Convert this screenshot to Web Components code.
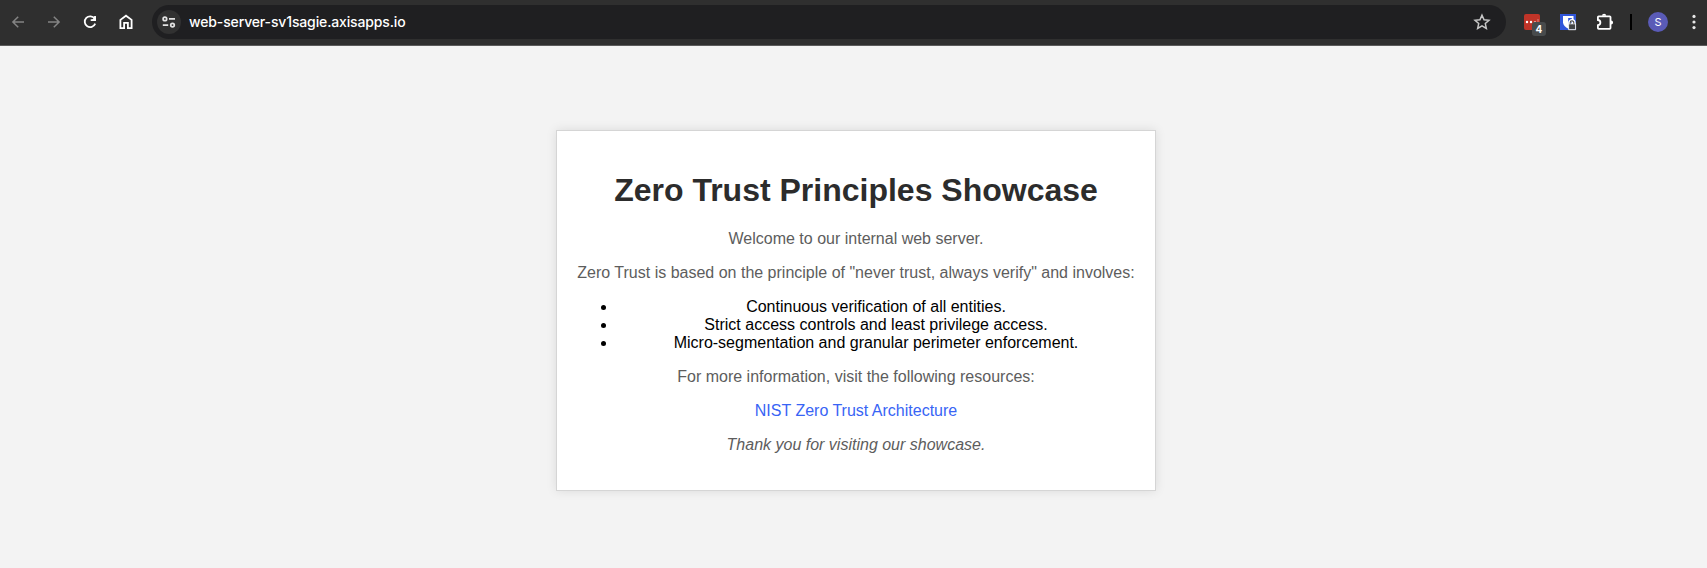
<!DOCTYPE html>
<html lang="en"><head><meta charset="utf-8"><title>Zero Trust Principles Showcase</title>
<style>
body{margin:0;background:#f3f3f3;font-family:"Liberation Sans",Arial,sans-serif;height:568px;overflow:hidden}
</style></head><body>
<browser-toolbar url="web-server-sv1sagie.axisapps.io"></browser-toolbar>
<showcase-card>
<page-title slot="title">Zero Trust Principles Showcase</page-title>
<text-line>Welcome to our internal web server.</text-line>
<text-line>Zero Trust is based on the principle of "never trust, always verify" and involves:</text-line>
<principle-list items="Continuous verification of all entities.|Strict access controls and least privilege access.|Micro-segmentation and granular perimeter enforcement."></principle-list>
<text-line>For more information, visit the following resources:</text-line>
<text-line variant="link">NIST Zero Trust Architecture</text-line>
<text-line variant="note">Thank you for visiting our showcase.</text-line>
</showcase-card>
<script>
const define=(name,html,setup)=>customElements.define(name,class extends HTMLElement{
  constructor(){super();this.attachShadow({mode:'open'}).innerHTML=html;}
  connectedCallback(){if(setup)setup(this,this.shadowRoot);}
});

const icons={
back:['#848484','<path d="M24 22H13.2M18.2 16.7 12.9 22l5.3 5.3" transform="translate(0 -4)"/>',36],
forward:['#848484','<path d="M12 18H22.8M17.8 12.7 23.1 18l-5.3 5.3"/>',36],
reload:['#fff','<path d="M22.6 14.6A5.4 5.4 0 1 0 23.2 19.7" stroke-width="1.8"/><path d="M23.9 12v5h-5z" fill="#fff" stroke="none"/><path d="M23 12v4.2h-4.3" stroke-width="1.8"/>',36],
home:['#fff','<path d="M12.4 24.1V15.9L18 11.7l5.6 4.2v8.2h-3.7v-5.3h-3.8v5.3z" stroke-width="1.8"/>',36],
tune:['#e3e3e3','<g stroke-width="1.7"><circle cx="7.9" cy="8.9" r="1.8"/><path d="M12 8.9H18M5.8 15.1h5.4"/><circle cx="15.5" cy="15.1" r="1.8"/></g>',24],
star:['#c7c7c7','<path d="m18 11.2 2.05 4.55 4.95.5-3.7 3.3 1.05 4.9L18 21.95l-4.35 2.5 1.05-4.9-3.7-3.3 4.95-.5z" stroke-width="1.5"/>',36],
puzzle:['#fff','<path d="M12.7 12.3h11a.8.8 0 0 1 .8.8v11a.8.8 0 0 1-.8.8h-11a.8.8 0 0 1-.8-.8v-2.9c3.3-.3 3.3-4.9 0-5.2v-2.9a.8.8 0 0 1 .8-.8z" stroke-width="1.8"/><path d="M16 11.8a2.1 2.1 0 0 1 4.2 0zM25 16.4a2.1 2.1 0 0 1 0 4.2z" fill="#fff" stroke="none"/>',36],
menu:['#e8e8e8','<g fill="#e8e8e8" stroke="none"><circle cx="18" cy="12.4" r="1.6"/><circle cx="18" cy="18" r="1.6"/><circle cx="18" cy="23.6" r="1.6"/></g>',36],
shield:['#fff','<path d="M10 10h16v16H10z" fill="#3055da" stroke="none"/><path d="M13 12h10.5v6.2c0 3-2.4 5-5.25 6.5C15.4 23.2 13 21.2 13 18.2z" fill="#fff" stroke="none"/><path d="M18.2 14h3.6v4.3c0 1.8-1.6 3.1-3.6 4.3z" fill="#3055da" stroke="none"/><path d="M19.6 20.4v-1.5a2.3 2.3 0 0 1 4.6 0v1.5" stroke="#fff" stroke-width="3"/><path d="M18.6 19.8h7v5.9h-7z" fill="#424446" stroke="#fff" stroke-width=".9"/><path d="M20.2 19.8v-1.1a1.8 1.8 0 0 1 3.6 0v1.1" stroke="#424446" stroke-width="1.1"/>',36]
};
define('tool-icon','<style>:host{display:block;flex:none}svg{display:block}</style><div></div>',(el,r)=>{
  const [color,body,s]=icons[el.getAttribute('name')];
  r.querySelector('div').innerHTML=`<svg width="${s}" height="${s}" viewBox="0 0 ${s} ${s}" fill="none" stroke="${color}" stroke-width="1.5">${body}</svg>`;
});
define('address-bar',`<style>
:host{display:flex;align-items:center;box-sizing:border-box;width:1354px;height:34px;border-radius:17px;background:#1f1f21;padding-left:5px;margin-left:8px;flex:none}
.site{width:24px;height:24px;border-radius:50%;background:#313131}
.url{flex:1;padding-left:8px;font:500 14px/20px Inter,sans-serif;letter-spacing:-.14px;color:#fff;white-space:nowrap}
.url span{display:inline-block}
tool-icon{margin-right:6px}
</style><div class="site"><tool-icon name="tune"></tool-icon></div><div class="url"><span><slot></slot></span></div><tool-icon name="star"></tool-icon>`);
define('extension-badge',`<style>
:host{display:block;position:relative;width:16px;height:16px;border-radius:2px;background:#c03428;flex:none}
svg{display:block}
b{position:absolute;left:8px;top:8px;width:14px;height:14px;border-radius:3px;background:#484b4c;color:#fff;font:700 10px/14px Inter,sans-serif;text-align:center}
</style><svg width="16" height="16" fill="#fff"><circle cx="3" cy="8" r="1.2"/><circle cx="7" cy="8" r="1.2"/><circle cx="11" cy="8" r="1.1" opacity=".6"/><path d="M13.6 5h.8v6h-.8z" opacity=".55"/></svg><b><slot></slot></b>`);
define('browser-toolbar',`<style>
:host{display:flex;align-items:center;box-sizing:border-box;height:46px;padding-bottom:2px;background:#2f2f2f;border-bottom:1px solid #5b5b5b}
nav{display:flex;align-items:center;width:100%;height:44px;padding-top:1px;box-sizing:border-box}
extension-badge{margin:0 10px 0 18px}
i{display:block;width:2px;height:16px;background:#000;margin:0 16px 0 8px;flex:none}
.avatar{width:20px;height:20px;border-radius:50%;background:#5a5bb7;color:#fff;font:11px/20px Inter,sans-serif;text-align:center;flex:none;margin-right:8px}
</style><nav><tool-icon name="back"></tool-icon><tool-icon name="forward"></tool-icon><tool-icon name="reload"></tool-icon><tool-icon name="home"></tool-icon>
<address-bar></address-bar><extension-badge>4</extension-badge><tool-icon name="shield"></tool-icon><tool-icon name="puzzle"></tool-icon><i></i><div class="avatar">S</div><tool-icon name="menu"></tool-icon></nav>`,
(el,r)=>{r.querySelector('address-bar').textContent=el.getAttribute('url');});
define('page-title',`<style>:host{display:block;margin:21.44px 0 21px}h1{margin:0;font-size:32px;line-height:37px;color:#2c2c2c;white-space:nowrap}</style><h1><slot></slot></h1>`);
define('text-line',`<style>:host{display:block;margin:16px 0;line-height:18px;color:#5d5d5d;white-space:nowrap}
:host([variant=link]){color:#3864f5}:host([variant=note]){font-style:italic}</style><slot></slot>`);
define('principle-list',`<style>:host{display:block;margin:16px 0;color:#000;line-height:18px}ul{margin:0;padding-left:40px}</style><ul></ul>`,(el,r)=>{
  r.querySelector('ul').innerHTML=el.getAttribute('items').split('|').map(t=>`<li>${t}</li>`).join('');
});
define('showcase-card',`<style>
:host{display:block;box-sizing:border-box;width:600px;height:361px;margin:84px 0 0 556px;padding:20px;border:1px solid #d5d5d5;background:#fff;box-shadow:0 0 10px rgba(0,0,0,.1);text-align:center;font-size:16px}
.body{display:flow-root}
</style><div class="body"><slot name="title"></slot><slot></slot></div>`);
</script>
</body></html>
